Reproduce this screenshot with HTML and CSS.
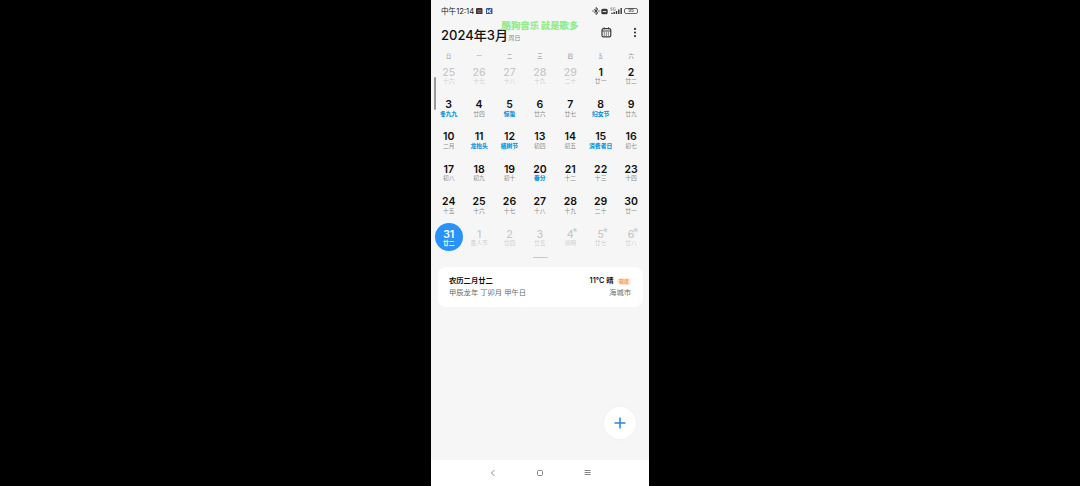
FILE: index.html
```html
<!DOCTYPE html>
<html lang="zh-CN">
<head>
    <meta charset="UTF-8">
    <meta name="viewport" content="width=device-width, initial-scale=1.0">
    <title>日历</title>
    <link rel="stylesheet" href="styles.css">
</head>
<body>
    <div class="phone">
        <div class="status-bar">
            <span class="status-time">中午12:14</span>
            <svg class="app-icon" viewBox="0 0 7 7"><rect width="7" height="7" rx="1" fill="#46343a"/><path d="M1.500 2.800h4M1.500 4.500h4" stroke="#a78c86" stroke-width=".8"/></svg>
            <svg class="app-icon" viewBox="0 0 7 7"><rect width="7" height="7" rx="1" fill="#36589f"/><path d="M1.800 1.500v3.800M5.300 1.500L3 3.500l2.300 2" fill="none" stroke="#fff" stroke-width="1.100"/></svg>
            <div class="status-right">
                <svg width="8" height="8" viewBox="0 0 8 8"><path d="M2 2.300l4 3.400L4 7.500v-7l2 1.800-4 3.400M.4 4h1.400M6.200 4h1.400" fill="none" stroke="#333" stroke-width=".9"/></svg>
                <svg width="7" height="7" viewBox="0 0 7 7"><rect x=".3" y=".7" width="6.400" height="5.600" rx="1.500" fill="#3a3a3a"/><path d="M1.700 3.500h3.600" stroke="#ddd" stroke-width="1"/></svg>
                <svg class="signal" width="13" height="8" viewBox="0 0 13 8"><path d="M2.500.8H.8v1.300h1.400v1.200H.6M5.400.8H3.700v2.500h1.700V2.200" fill="none" stroke="#777" stroke-width=".6"/><path d="M2 7V5.800M4.200 7V5M6.500 7V4M8.800 7V2.600M11.200 7V1" stroke="#333" stroke-width="1.400"/></svg>
                <div class="battery">95</div>
            </div>
        </div>

        <div class="lyrics">酷狗音乐 就是歌多</div>

        <div class="header">
            <h1>2024年3月</h1>
            <span class="weekday">周日</span>
            <div class="header-actions">
                <svg width="11" height="11" viewBox="0 0 11 11" fill="none" stroke="#3c3c3c"><rect x="1" y="1.600" width="8.800" height="8.200" rx="1.600" stroke-width="1.200"/><path d="M1 4h8.800M3.200.3v2M7.600.3v2"/><path d="M2.700 6h5.400M2.700 8h5.400" stroke-dasharray="1.200 .9"/></svg>
                <svg width="4" height="11" viewBox="0 0 4 11" fill="#333"><circle cx="2" cy="1.900" r="1.100"/><circle cx="2" cy="5.500" r="1.100"/><circle cx="2" cy="9.100" r="1.100"/></svg>
            </div>
        </div>

        <div class="week-names">
            <span>日</span><span>一</span><span>二</span><span>三</span><span>四</span><span>五</span><span>六</span>
        </div>

        <div class="month">
            <div class="scroll-mark"></div>
            <div class="day other"><b>25</b><i>十六</i></div>
            <div class="day other"><b>26</b><i>十七</i></div>
            <div class="day other"><b>27</b><i>十八</i></div>
            <div class="day other"><b>28</b><i>十九</i></div>
            <div class="day other"><b>29</b><i>二十</i></div>
            <div class="day"><b>1</b><i>廿一</i></div>
            <div class="day"><b>2</b><i>廿二</i></div>

            <div class="day festival"><b>3</b><i>冬九九</i></div>
            <div class="day"><b>4</b><i>廿四</i></div>
            <div class="day festival"><b>5</b><i>惊蛰</i></div>
            <div class="day"><b>6</b><i>廿六</i></div>
            <div class="day"><b>7</b><i>廿七</i></div>
            <div class="day festival"><b>8</b><i>妇女节</i></div>
            <div class="day"><b>9</b><i>廿九</i></div>

            <div class="day"><b>10</b><i>二月</i></div>
            <div class="day festival"><b>11</b><i>龙抬头</i></div>
            <div class="day festival"><b>12</b><i>植树节</i></div>
            <div class="day"><b>13</b><i>初四</i></div>
            <div class="day"><b>14</b><i>初五</i></div>
            <div class="day festival"><b>15</b><i>消费者日</i></div>
            <div class="day"><b>16</b><i>初七</i></div>

            <div class="day"><b>17</b><i>初八</i></div>
            <div class="day"><b>18</b><i>初九</i></div>
            <div class="day"><b>19</b><i>初十</i></div>
            <div class="day festival"><b>20</b><i>春分</i></div>
            <div class="day"><b>21</b><i>十二</i></div>
            <div class="day"><b>22</b><i>十三</i></div>
            <div class="day"><b>23</b><i>十四</i></div>

            <div class="day"><b>24</b><i>十五</i></div>
            <div class="day"><b>25</b><i>十六</i></div>
            <div class="day"><b>26</b><i>十七</i></div>
            <div class="day"><b>27</b><i>十八</i></div>
            <div class="day"><b>28</b><i>十九</i></div>
            <div class="day"><b>29</b><i>二十</i></div>
            <div class="day"><b>30</b><i>廿一</i></div>

            <div class="day selected"><b>31</b><i>廿二</i></div>
            <div class="day other"><b>1</b><i>愚人节</i></div>
            <div class="day other"><b>2</b><i>廿四</i></div>
            <div class="day other"><b>3</b><i>廿五</i></div>
            <div class="day other"><b>4</b><i>清明</i><em>休</em></div>
            <div class="day other"><b>5</b><i>廿七</i><em>休</em></div>
            <div class="day other"><b>6</b><i>廿八</i><em>休</em></div>
        </div>

        <div class="handle"></div>

        <div class="card">
            <div class="card-row">
                <span class="lunar-date">农历二月廿二</span>
                <span class="weather">11℃ 晴</span>
                <span class="air">轻度</span>
            </div>
            <div class="card-row sub">
                <span>甲辰龙年 丁卯月 甲午日</span>
                <span>海城市</span>
            </div>
        </div>

        <button class="add-btn">
            <svg width="12" height="12" viewBox="0 0 12 12"><path d="M6 .5v11M.5 6h11" stroke="#2488e0" stroke-width="1.500"/></svg>
        </button>

        <div class="nav-bar">
            <svg width="8" height="8" viewBox="0 0 8 8"><path d="M5.300 1.200L2.500 4l2.800 2.800"/></svg>
            <svg width="8" height="8" viewBox="0 0 8 8"><rect x="1.500" y="1.500" width="5" height="5" rx="1"/></svg>
            <svg width="8" height="8" viewBox="0 0 8 8"><path d="M.6 1.500h6M.6 3.500h6M.6 5.500h6"/></svg>
        </div>
    </div>
</body>
</html>
```
FILE: styles.css
```css
* {
    box-sizing: border-box;
}
body {
    margin: 0;
    background: #000;
    font-family: Inter, "Noto Sans CJK SC", sans-serif;
    color: #111;
}
.phone {
    position: relative;
    width: 218px;
    height: 486px;
    margin: 0 auto;
    background: #f6f6f6;
    overflow: hidden;
    display: flex;
    flex-direction: column;
    white-space: nowrap;
}
.status-bar {
    height: 22px;
    padding: 0 11px 0 10px;
    display: flex;
    align-items: center;
    flex-shrink: 0;
}
.status-time {
    margin-top: -2px;
    font-size: 7.6px;
    width: 35px;
    color: #222;
}
.app-icon {
    width: 6.5px;
    height: 6.5px;
    margin-right: 3.5px;
}
.status-right {
    margin-left: auto;
    display: flex;
    align-items: center;
    gap: 1.5px;
}
.battery {
    width: 14px;
    height: 6px;
    border: 1px solid #666;
    border-radius: 2px;
    font-size: 4.5px;
    line-height: 4px;
    font-weight: 600;
    text-align: center;
    color: #444;
    flex-shrink: 0;
}
.lyrics {
    position: absolute;
    left: 70.5px;
    top: 19px;
    font-size: 9.4px;
    line-height: 14px;
    font-weight: 900;
    color: #90ed8b;
}
.header {
    height: 27px;
    padding: 0 12px 0 10px;
    display: flex;
    align-items: center;
    flex-shrink: 0;
}
.header h1 {
    margin: 0;
    width: 67.5px;
    font-size: 13px;
    line-height: 27px;
    font-weight: 500;
}
.weekday {
    margin-top: 4px;
    font-size: 6px;
    color: #888;
}
.header-actions {
    margin-left: auto;
    margin-top: -6px;
    display: flex;
    align-items: center;
    gap: 21px;
}
.week-names {
    height: 12px;
    padding: 1px 2.5px 0;
    display: grid;
    grid-template-columns: repeat(7, 30.4px);
    font-size: 5.2px;
    line-height: 12px;
    text-align: center;
    color: #888;
    flex-shrink: 0;
}
.month {
    position: relative;
    padding: 0 2.5px;
    display: grid;
    grid-template-columns: repeat(7, 30.4px);
    grid-auto-rows: 28.4px;
    row-gap: 4px;
    justify-items: center;
    flex-shrink: 0;
}
.scroll-mark {
    position: absolute;
    left: 3px;
    top: 15.5px;
    width: 2px;
    height: 33px;
    border-radius: 1px;
    background: #999;
}
.day {
    position: relative;
    width: 28.4px;
    height: 28.4px;
    padding-top: 5.7px;
    display: flex;
    flex-direction: column;
    align-items: center;
}
.day b {
    font-size: 10.5px;
    line-height: 12px;
    font-weight: 600;
}
.day i {
    margin-top: -0.5px;
    font-size: 5.8px;
    line-height: 6px;
    font-style: normal;
    color: #8c8c8c;
}
.day em {
    position: absolute;
    left: 17px;
    top: 5px;
    font-size: 4px;
    line-height: 6px;
    font-style: normal;
    color: #93bfc3;
}
.day.other b {
    font-weight: 500;
    color: #c8c8c8;
}
.day.other i {
    color: #d0d0d0;
}
.day.festival i {
    color: #1096e0;
    font-weight: 900;
}
.day.selected {
    border-radius: 50%;
    background: #2b92fb;
}
.day.selected b, .day.selected i {
    color: #fff;
}
.day.selected i {
    font-weight: 700;
}
.handle {
    width: 15px;
    height: 1px;
    margin: 6px auto 9px;
    background: #c8c8c8;
    flex-shrink: 0;
}
.card {
    height: 40px;
    margin: 0 6.5px;
    padding: 7.5px 11.5px;
    border-radius: 8px;
    background: #fff;
    flex-shrink: 0;
}
.card-row {
    height: 12.4px;
    display: flex;
    align-items: center;
    font-size: 7.3px;
    line-height: 12px;
}
.card-row.sub {
    justify-content: space-between;
    color: #6c6c6c;
}
.lunar-date {
    font-weight: 600;
}
.weather {
    margin-left: auto;
    font-weight: 600;
}
.air {
    width: 14px;
    height: 7px;
    margin-left: 3.5px;
    border-radius: 2px;
    background: #ffeede;
    font-size: 5px;
    line-height: 7px;
    font-weight: 700;
    text-align: center;
    color: #f39a4a;
}
.add-btn {
    position: absolute;
    right: 13px;
    bottom: 47.4px;
    width: 32px;
    height: 32px;
    padding: 0;
    border: none;
    border-radius: 50%;
    background: #fff;
    box-shadow: 0 0 4px rgba(0, 0, 0, 0.04);
    display: flex;
    align-items: center;
    justify-content: center;
}
.nav-bar {
    height: 26px;
    margin-top: auto;
    background: #fff;
    display: flex;
    align-items: center;
    justify-content: center;
    gap: 39.5px;
    flex-shrink: 0;
}
.nav-bar svg {
    fill: none;
    stroke: #777;
    stroke-width: 0.9;
}
```
